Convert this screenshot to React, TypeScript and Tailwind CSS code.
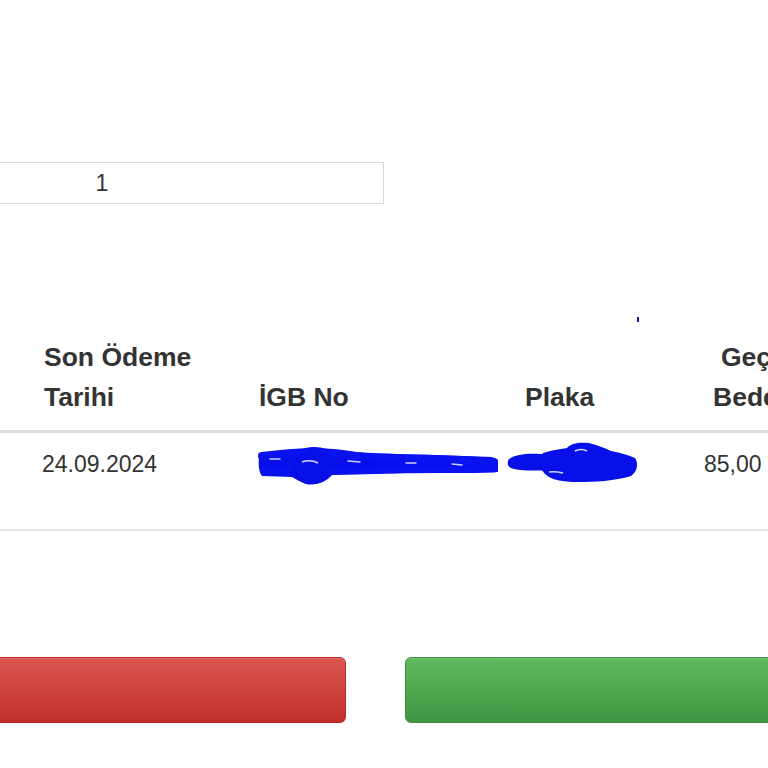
import React from "react";

function IgbScribble() {
  return (
    <svg width="246" height="46" viewBox="0 0 246 46" className="absolute left-[256px] top-[444px]">
      <path
        d="M4 9 L40 8 C48 3 62 1 72 6 L120 10 L180 11 L236 13 L242 16 L242 28 L200 28 L150 29 L110 30 L76 31 C70 38 60 42 50 40 C44 38 40 35 36 33 L6 32 C2 28 2 14 4 9 Z"
        fill="#0710e8"
      />
      <path d="M6 12 C40 8 70 6 100 12 C140 15 190 14 238 18" stroke="#0a12f0" strokeWidth="8" strokeLinecap="round" fill="none" />
      <path d="M8 27 C50 26 90 28 130 26 C170 25 210 26 238 25" stroke="#0a12f0" strokeWidth="7" strokeLinecap="round" fill="none" />
      <path d="M38 22 C42 8 56 2 70 6 C76 14 72 28 64 38 C56 42 46 40 40 34 C36 30 36 26 38 22 Z" fill="#0710e8" />
      <path d="M14 15 L24 15 M92 17 L104 18 M150 19 L160 19 M196 20 L206 21" stroke="#c9ceff" strokeWidth="1.5" strokeLinecap="round" />
      <path d="M46 18 C52 16 58 17 62 19" stroke="#d5d9ff" strokeWidth="1.5" fill="none" />
    </svg>
  );
}

function PlakaScribble() {
  return (
    <svg width="136" height="46" viewBox="0 0 136 46" className="absolute left-[505px] top-[440px]">
      <path d="M4 19 C12 13 30 13 44 15 L46 30 C30 31 14 31 6 28 C2 26 2 22 4 19 Z" fill="#0710e8" />
      <path
        d="M38 13 C48 10 56 9 62 8 C66 3 74 2 84 3 C92 5 100 8 106 11 C116 13 124 15 130 18 C134 24 132 32 126 36 C110 41 90 42 72 42 C58 42 46 40 40 34 C34 28 34 18 38 13 Z"
        fill="#0710e8"
      />
      <path d="M44 32 C50 31 54 32 58 33" stroke="#cfd3ff" strokeWidth="1.5" fill="none" />
      <path d="M70 11 C74 9 78 9 82 11" stroke="#dfe2ff" strokeWidth="1.5" fill="none" />
    </svg>
  );
}

export default function App() {
  return (
    <div
      className="relative w-[768px] h-[768px] overflow-hidden bg-white text-[#333]"
      style={{ fontFamily: '"Liberation Sans", Arial, sans-serif' }}
    >
      <div className="flex flex-col">
        <div className="h-[162px]" />
        <div className="ml-[-180px] w-[564px] h-[42px] border border-[#d9d9d9] flex items-center justify-center text-[23px] leading-none">
          1
        </div>
        <div className="h-[133px]" />
        {/* table header */}
        <div className="grid grid-cols-[259px_249px_150px_192px] items-end h-[96px] pb-[17px] text-[26.5px] font-bold leading-[40px] text-[#333] border-b-[3px] border-[#dddddd]">
          <div className="pl-[44px]">
            Son Ödeme
            <br />
            Tarihi
          </div>
          <div>İGB No</div>
          <div className="pl-[17px]">Plaka</div>
          <div className="pl-[60px]">
            <div className="pl-[3px]">Geçiş</div>
            <div className="ml-[-5px]">Bedeli</div>
          </div>
        </div>
        {/* table row */}
        <div className="grid grid-cols-[259px_249px_150px_192px] items-start h-[98px] pt-[11px] text-[23px] leading-[40px] text-[#333] border-b-2 border-[#e6e6e6]">
          <div className="pl-[42px]">24.09.2024</div>
          <div />
          <div />
          <div className="pl-[46px] whitespace-nowrap">85,00 TL</div>
        </div>
        <div className="h-[126px]" />
        {/* buttons */}
        <div className="flex gap-[59px] h-[66px]">
          <div className="ml-[-20px] w-[366px] shrink-0 h-full rounded-[6px] border border-[#b92c28] bg-gradient-to-b from-[#db5550] to-[#c12e2a] shadow-[inset_0_1px_0_rgba(255,255,255,0.15)]" />
          <div className="w-[420px] shrink-0 h-full rounded-[6px] border border-[#3e8f3e] bg-gradient-to-b from-[#5fb95f] to-[#419641] shadow-[inset_0_1px_0_rgba(255,255,255,0.15)]" />
        </div>
      </div>
      <IgbScribble />
      <PlakaScribble />
      <div className="absolute left-[637px] top-[317px] w-[2px] h-[5px] bg-[#1a1a9a]" />
    </div>
  );
}
